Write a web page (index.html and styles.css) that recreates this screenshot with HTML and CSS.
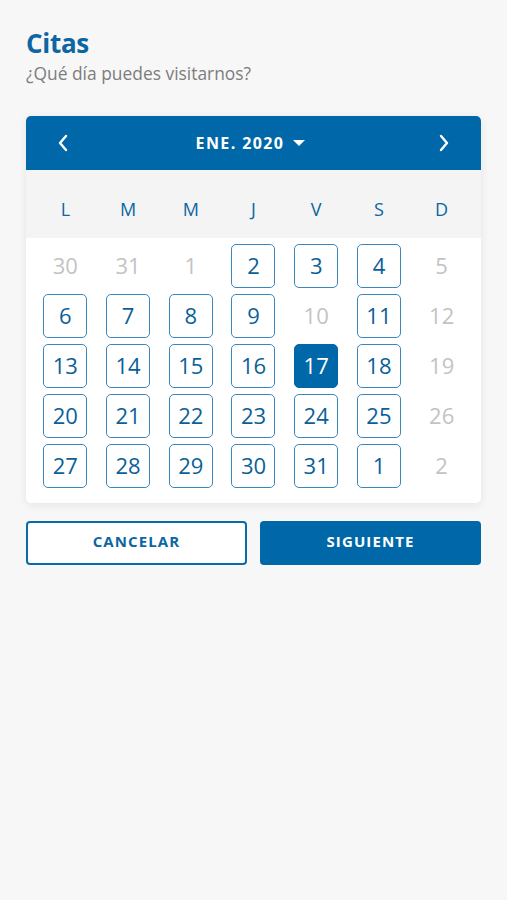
FILE: index.html
```html
<!DOCTYPE html>
<html lang="es">
<head>
    <meta charset="UTF-8">
    <meta name="viewport" content="width=device-width, initial-scale=1.0">
    <title>Citas</title>
    <link rel="stylesheet" href="styles.css">
</head>
<body>
    <div class="page">
        <h1 class="title">Citas</h1>
        <p class="subtitle">¿Qué día puedes visitarnos?</p>

        <!-- Calendar -->
        <div class="calendar">
            <div class="cal-header">
                <button class="nav-btn" aria-label="Anterior">
                    <svg width="12" height="18" viewBox="0 0 12 18"><path d="M9 2 L3 9 L9 16" fill="none" stroke="#fff" stroke-width="2.4" stroke-linecap="round" stroke-linejoin="round"/></svg>
                </button>
                <div class="month">ENE. 2020
                    <svg width="12" height="8" viewBox="0 0 12 8"><path d="M0 1 L12 1 L6 7 Z" fill="#fff"/></svg>
                </div>
                <button class="nav-btn" aria-label="Siguiente">
                    <svg width="12" height="18" viewBox="0 0 12 18"><path d="M3 2 L9 9 L3 16" fill="none" stroke="#fff" stroke-width="2.4" stroke-linecap="round" stroke-linejoin="round"/></svg>
                </button>
            </div>
            <div class="weekdays">
                <span>L</span><span>M</span><span>M</span><span>J</span><span>V</span><span>S</span><span>D</span>
            </div>
            <div class="days">
                <span class="day off">30</span>
                <span class="day off">31</span>
                <span class="day off">1</span>
                <span class="day">2</span>
                <span class="day">3</span>
                <span class="day">4</span>
                <span class="day off">5</span>

                <span class="day">6</span>
                <span class="day">7</span>
                <span class="day">8</span>
                <span class="day">9</span>
                <span class="day off">10</span>
                <span class="day">11</span>
                <span class="day off">12</span>

                <span class="day">13</span>
                <span class="day">14</span>
                <span class="day">15</span>
                <span class="day">16</span>
                <span class="day selected">17</span>
                <span class="day">18</span>
                <span class="day off">19</span>

                <span class="day">20</span>
                <span class="day">21</span>
                <span class="day">22</span>
                <span class="day">23</span>
                <span class="day">24</span>
                <span class="day">25</span>
                <span class="day off">26</span>

                <span class="day">27</span>
                <span class="day">28</span>
                <span class="day">29</span>
                <span class="day">30</span>
                <span class="day">31</span>
                <span class="day">1</span>
                <span class="day off">2</span>
            </div>
        </div>

        <div class="actions">
            <button class="btn btn-outline">CANCELAR</button>
            <button class="btn btn-primary">SIGUIENTE</button>
        </div>
    </div>
</body>
</html>
```

FILE: styles.css
```css
/* Page */
body {
    margin: 0;
    background: #f7f7f7;
    font-family: 'Open Sans', 'Noto Sans', sans-serif;
}

.page {
    padding: 27px 26px;
}

/* Heading */
.title {
    margin: 0;
    font-size: 26px;
    font-weight: 700;
    color: #0b66a3;
    line-height: 32px;
    letter-spacing: -0.3px;
}

.subtitle {
    margin: 3px 0 0;
    font-size: 17.4px;
    color: #7d7d7d;
    line-height: 22px;
}

/* Calendar card */
.calendar {
    margin-top: 32px;
    background: #ffffff;
    border-radius: 5px;
    box-shadow: 0 2px 10px rgba(0, 0, 0, 0.08);
    overflow: hidden;
}

.cal-header {
    height: 54px;
    background: #0068a8;
    display: flex;
    align-items: center;
    justify-content: space-between;
    padding: 0 31px 0 31px;
}

.nav-btn {
    background: none;
    border: none;
    padding: 0;
    display: flex;
    cursor: pointer;
}

.month {
    display: flex;
    align-items: center;
    gap: 9px;
    color: #ffffff;
    font-size: 16px;
    font-weight: 700;
    letter-spacing: 1.4px;
    margin-right: 6px;
}

.weekdays {
    height: 68px;
    background: #f4f4f4;
    display: grid;
    grid-template-columns: repeat(7, 1fr);
    align-items: center;
    padding: 10px 8px 0;
    box-sizing: border-box;
}

.weekdays span {
    text-align: center;
    font-size: 18px;
    color: #0b66a3;
}

.days {
    display: grid;
    grid-template-columns: repeat(7, 1fr);
    row-gap: 6px;
    padding: 6px 8px 15px;
    justify-items: center;
}

.day {
    width: 44px;
    height: 44px;
    box-sizing: border-box;
    border: 1.5px solid #3a87bd;
    border-radius: 5px;
    display: flex;
    align-items: center;
    justify-content: center;
    font-size: 22px;
    line-height: 1;
    padding-bottom: 3px;
    color: #0b5f99;
}

.day.off {
    border-color: transparent;
    color: #c3c3c3;
}

.day.selected {
    background: #0068a8;
    border-color: #0068a8;
    color: #ffffff;
}

/* Buttons */
.actions {
    margin-top: 18px;
    display: grid;
    grid-template-columns: 1fr 1fr;
    gap: 13px;
}

.btn {
    height: 44px;
    padding: 0 0 5px;
    border-radius: 4px;
    font-family: 'Open Sans', 'Noto Sans', sans-serif;
    font-size: 15px;
    font-weight: 700;
    letter-spacing: 1.1px;
    cursor: pointer;
}

.btn-outline {
    background: #ffffff;
    border: 2px solid #0b6aa8;
    color: #0b66a3;
}

.btn-primary {
    background: #0068a8;
    border: none;
    color: #ffffff;
}
```
